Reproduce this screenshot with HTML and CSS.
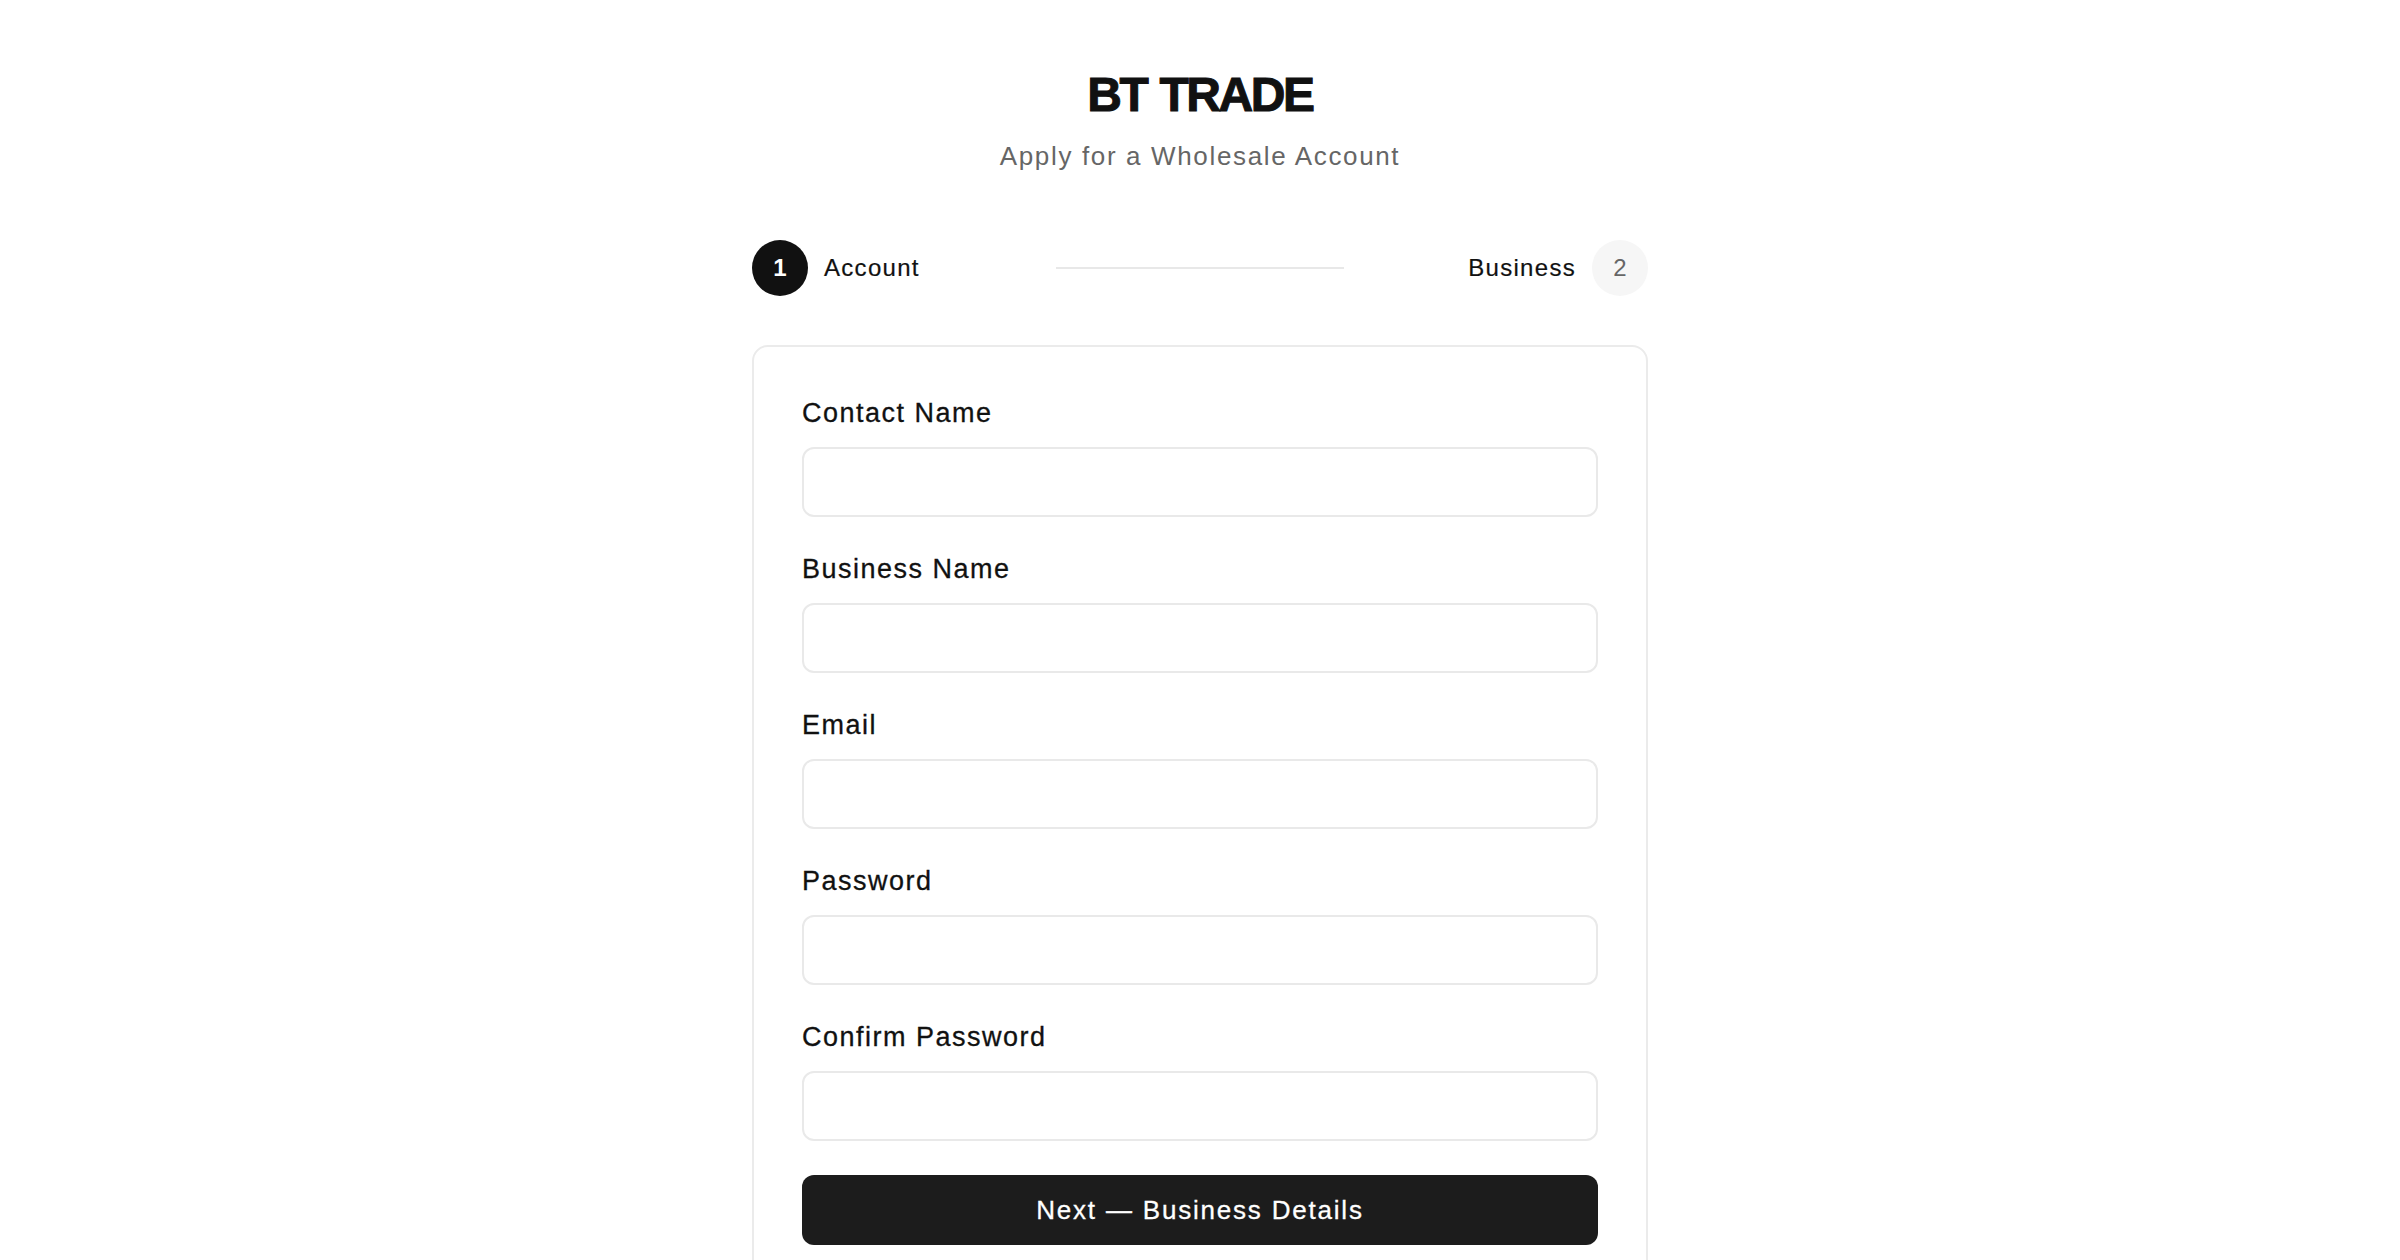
FILE: index.html
```html
<!DOCTYPE html>
<html lang="en">
<head>
<meta charset="utf-8">
<title>BT TRADE — Apply for a Wholesale Account</title>
<link rel="stylesheet" href="styles.css">
</head>
<body>
<main class="page">
  <header class="brand">
    <h1 class="brand-title">BT TRADE</h1>
    <p class="brand-sub">Apply for a Wholesale Account</p>
  </header>

  <div class="stepper">
    <div class="step step-left">
      <span class="step-dot step-dot-active">1</span>
      <span class="step-label">Account</span>
    </div>
    <div class="step-line"></div>
    <div class="step step-right">
      <span class="step-label">Business</span>
      <span class="step-dot step-dot-idle">2</span>
    </div>
  </div>

  <form class="card">
    <div class="field">
      <label class="field-label" for="contact">Contact Name</label>
      <input class="field-input" id="contact" type="text">
    </div>
    <div class="field">
      <label class="field-label" for="business">Business Name</label>
      <input class="field-input" id="business" type="text">
    </div>
    <div class="field">
      <label class="field-label" for="email">Email</label>
      <input class="field-input" id="email" type="email">
    </div>
    <div class="field">
      <label class="field-label" for="password">Password</label>
      <input class="field-input" id="password" type="password">
    </div>
    <div class="field">
      <label class="field-label" for="confirm">Confirm Password</label>
      <input class="field-input" id="confirm" type="password">
    </div>
    <button class="btn-next" type="button">Next — Business Details</button>
  </form>
</main>
</body>
</html>
```

FILE: styles.css
```css
* { box-sizing: border-box; }

html, body {
  margin: 0;
  padding: 0;
  background: #ffffff;
}

body {
  font-family: "Liberation Sans", Arial, sans-serif;
  color: #111111;
}

.page {
  width: 896px;
  margin: 0 auto;
  padding-top: 66px;
  display: flex;
  flex-direction: column;
}

.brand {
  display: flex;
  flex-direction: column;
  align-items: center;
  gap: 14px;
}

.brand-title {
  margin: 0;
  font-size: 48px;
  line-height: 58px;
  font-weight: 700;
  letter-spacing: -2.4px;
  word-spacing: 2px;
  color: #111111;
  -webkit-text-stroke: 1px #111111;
}

.brand-sub {
  margin: 0;
  font-size: 26px;
  line-height: 36px;
  letter-spacing: 1.65px;
  color: #666666;
}

.stepper {
  margin-top: 66px;
  display: grid;
  grid-template-columns: 1fr 288px 1fr;
  align-items: center;
  height: 56px;
}

.step {
  display: flex;
  align-items: center;
  gap: 16px;
}

.step-right { justify-content: flex-end; }

.step-dot {
  width: 56px;
  height: 56px;
  border-radius: 50%;
  display: flex;
  align-items: center;
  justify-content: center;
  font-size: 24px;
  flex: none;
}

.step-dot-active {
  background: #111111;
  color: #ffffff;
  font-weight: 700;
}

.step-dot-idle {
  background: #f6f6f6;
  color: #666666;
}

.step-label {
  font-size: 24px;
  letter-spacing: 1.3px;
  color: #111111;
  -webkit-text-stroke: 0.2px #111111;
}

.step-line {
  height: 2px;
  background: #e8e8e8;
}

.card {
  margin-top: 49px;
  border: 2px solid #ebebeb;
  border-radius: 16px;
  padding: 48px 48px 48px;
  display: flex;
  flex-direction: column;
  gap: 34px;
}

.field {
  display: flex;
  flex-direction: column;
  gap: 16px;
}

.field-label {
  font-size: 27px;
  line-height: 36px;
  letter-spacing: 1.5px;
  color: #111111;
  -webkit-text-stroke: 0.3px #111111;
}

.field-input {
  height: 70px;
  width: 100%;
  border: 2px solid #e9e9e9;
  border-radius: 12px;
  background: #ffffff;
  font-family: inherit;
  font-size: 26px;
  padding: 0 20px;
  outline: none;
}

.btn-next {
  height: 70px;
  width: 100%;
  border: none;
  border-radius: 12px;
  background: #1c1c1c;
  color: #ffffff;
  font-family: inherit;
  font-size: 26px;
  letter-spacing: 1.8px;
  -webkit-text-stroke: 0.3px #ffffff;
  cursor: pointer;
}
```
